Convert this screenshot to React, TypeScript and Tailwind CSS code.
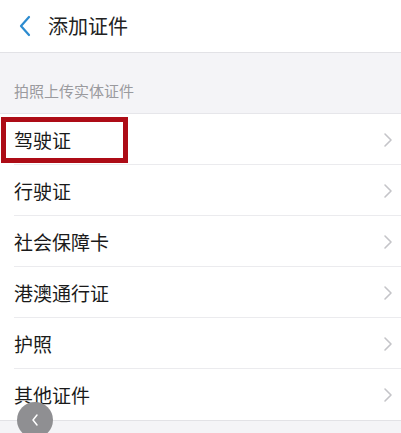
import React from 'react';

const ROWS = ['驾驶证', '行驶证', '社会保障卡', '港澳通行证', '护照', '其他证件'];

function Chevron() {
  return (
    <svg width="10" height="16" viewBox="0 0 10 16" fill="none">
      <path d="M2 2l6 6-6 6" stroke="#c4c4c8" strokeWidth="1.6" strokeLinecap="round" strokeLinejoin="round" />
    </svg>
  );
}

export default function App() {
  return (
    <div
      className="relative h-[433px] w-[401px] overflow-hidden bg-[#f4f4f7]"
      style={{ fontFamily: '"Noto Sans CJK SC", "Noto Sans", sans-serif' }}
    >
      {/* Header */}
      <div className="flex h-[53px] items-center border-b border-[#e2e2e6] bg-white">
        <div className="flex w-[46px] justify-center pl-1">
          <svg width="14" height="22" viewBox="0 0 14 22" fill="none">
            <path d="M11 2L3 11l8 9" stroke="#2c8bcf" strokeWidth="2.2" strokeLinecap="round" strokeLinejoin="round" />
          </svg>
        </div>
        <div className="pl-[2px] text-[20px] leading-none text-[#222]">添加证件</div>
      </div>

      {/* Section label */}
      <div className="h-[60px] px-[14px] pt-[28px] text-[15px] leading-[20px] text-[#9a9a9e]">拍照上传实体证件</div>

      {/* List */}
      <div className="border-t border-[#e6e6ea] bg-white">
        {ROWS.map((label, i) => (
          <div key={label} className="relative flex h-[51px] items-center justify-between pl-[14px] pr-[8px]">
            <span className="text-[19px] leading-none text-[#1a1a1a]">{label}</span>
            <Chevron />
            {i < ROWS.length - 1 && <div className="absolute bottom-0 left-[14px] right-0 h-px bg-[#ebebee]" />}
          </div>
        ))}
      </div>
      <div className="h-px bg-[#e2e2e6]" />

      {/* Highlight box */}
      <div className="absolute left-[1px] top-[117px] h-[46px] w-[127px] border-[5px] border-[#ad0c16]" />

      {/* Floating back button */}
      <div className="absolute left-[17px] top-[402px] flex h-[36px] w-[36px] items-center justify-center rounded-full bg-[#8f8f92]">
        <svg width="10" height="14" viewBox="0 0 10 14" fill="none">
          <path d="M7 2L3 7l4 5" stroke="#ffffff" strokeWidth="1.5" strokeLinecap="round" strokeLinejoin="round" />
        </svg>
      </div>
    </div>
  );
}
